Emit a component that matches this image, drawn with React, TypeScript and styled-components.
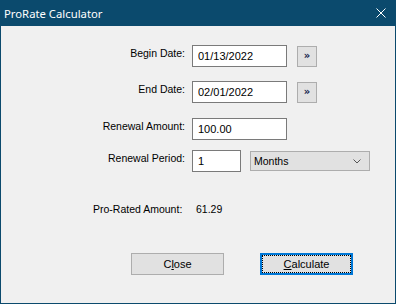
import React, { useState } from 'react';
import styled, { createGlobalStyle } from 'styled-components';

const GlobalStyle = createGlobalStyle`
  html, body {
    margin: 0;
    padding: 0;
    background: #f0f0f0;
  }
  * {
    box-sizing: border-box;
  }
`;

const Window = styled.div`
  width: 396px;
  height: 304px;
  display: flex;
  flex-direction: column;
  font-family: 'Liberation Sans', Arial, sans-serif;
  font-size: 10.5px;
  color: #000;
`;

const TitleBar = styled.div`
  height: 26px;
  flex: 0 0 26px;
  background: #0b4a6d;
  color: #fff;
  display: flex;
  align-items: center;
  justify-content: space-between;
  padding: 0 10px 0 4px;
  font-family: 'Noto Sans', 'Open Sans', sans-serif;
  font-size: 11.3px;
`;

const CloseIcon = styled.svg`
  width: 10px;
  height: 10px;
  display: block;
`;

const Body = styled.div`
  flex: 1;
  background: #f0f0f0;
  border: 1px solid #0b4a6d;
  border-top: none;
  padding-top: 19px;
  display: flex;
  flex-direction: column;
`;

const Row = styled.div<{ $top?: number }>`
  display: flex;
  align-items: flex-start;
  margin-top: ${p => p.$top ?? 0}px;
`;

const Label = styled.div`
  width: 185px;
  text-align: right;
  padding-top: 2px;
  padding-right: 1px;
  white-space: nowrap;
`;

const TextBox = styled.input<{ $width: number }>`
  margin: 0 0 0 6px;
  width: ${p => p.$width}px;
  height: 22px;
  border: 1px solid #7a7a7a;
  background: #fff;
  font-family: 'Liberation Sans', Arial, sans-serif;
  font-size: 11px;
  color: #000;
  padding: 0 0 0 5px;
  outline: none;
`;

const PickButton = styled.button`
  margin: 1px 0 0 10px;
  width: 20px;
  height: 21px;
  padding: 0 0 1px 0;
  border: 1px solid #adadad;
  background: #e1e1e1;
  color: #10204a;
  font-family: 'DejaVu Sans', sans-serif;
  font-size: 10px;
  font-weight: bold;
  line-height: 1;
  display: flex;
  align-items: center;
  justify-content: center;
`;

const SelectBox = styled.div`
  margin: 1px 0 0 9px;
  width: 120px;
  height: 20px;
  border: 1px solid #adadad;
  background: #e1e1e1;
  display: flex;
  align-items: center;
  justify-content: space-between;
  padding: 0 8px 0 3px;
`;

const Chevron = styled.svg`
  width: 8px;
  height: 5px;
  display: block;
`;

const ResultRow = styled.div`
  display: flex;
  margin-top: 31px;
  padding-left: 92px;
`;

const ResultLabel = styled.span`
  width: 103px;
`;

const ButtonRow = styled.div`
  display: flex;
  gap: 36px;
  margin-top: 38px;
  padding-left: 130px;
`;

const DialogButton = styled.button<{ $focused?: boolean }>`
  position: relative;
  width: 93px;
  height: 22px;
  margin: 0;
  padding: 0;
  background: #e1e1e1;
  border: ${p => (p.$focused ? '2px solid #0078d7' : '1px solid #adadad')};
  font-family: 'Liberation Sans', Arial, sans-serif;
  font-size: 11px;
  color: #000;

  &::after {
    content: '';
    display: ${p => (p.$focused ? 'block' : 'none')};
    position: absolute;
    inset: 0;
    border: 1px dotted #000;
  }
`;

export default function App() {
  const [begin, setBegin] = useState('01/13/2022');
  const [end, setEnd] = useState('02/01/2022');
  const [amount, setAmount] = useState('100.00');
  const [period, setPeriod] = useState('1');

  return (
    <>
      <GlobalStyle />
      <Window>
        <TitleBar>
          <span>ProRate Calculator</span>
          <CloseIcon viewBox="0 0 10 10">
            <path d="M0.5 0.5 L9.5 9.5 M9.5 0.5 L0.5 9.5" stroke="#fff" strokeWidth="1" />
          </CloseIcon>
        </TitleBar>
        <Body>
          <Row>
            <Label>Begin Date:</Label>
            <TextBox $width={95} value={begin} onChange={e => setBegin(e.target.value)} />
            <PickButton>»</PickButton>
          </Row>
          <Row $top={14}>
            <Label>End Date:</Label>
            <TextBox $width={95} value={end} onChange={e => setEnd(e.target.value)} />
            <PickButton>»</PickButton>
          </Row>
          <Row $top={15}>
            <Label>Renewal Amount:</Label>
            <TextBox $width={95} value={amount} onChange={e => setAmount(e.target.value)} />
          </Row>
          <Row $top={10}>
            <Label>Renewal Period:</Label>
            <TextBox $width={49} value={period} onChange={e => setPeriod(e.target.value)} />
            <SelectBox>
              <span>Months</span>
              <Chevron viewBox="0 0 8 5">
                <path d="M0.5 0.5 L4 4 L7.5 0.5" stroke="#555" strokeWidth="1" fill="none" />
              </Chevron>
            </SelectBox>
          </Row>
          <ResultRow>
            <ResultLabel>Pro-Rated Amount:</ResultLabel>
            <span>61.29</span>
          </ResultRow>
          <ButtonRow>
            <DialogButton>
              C<u>l</u>ose
            </DialogButton>
            <DialogButton $focused>
              <u>C</u>alculate
            </DialogButton>
          </ButtonRow>
        </Body>
      </Window>
    </>
  );
}
